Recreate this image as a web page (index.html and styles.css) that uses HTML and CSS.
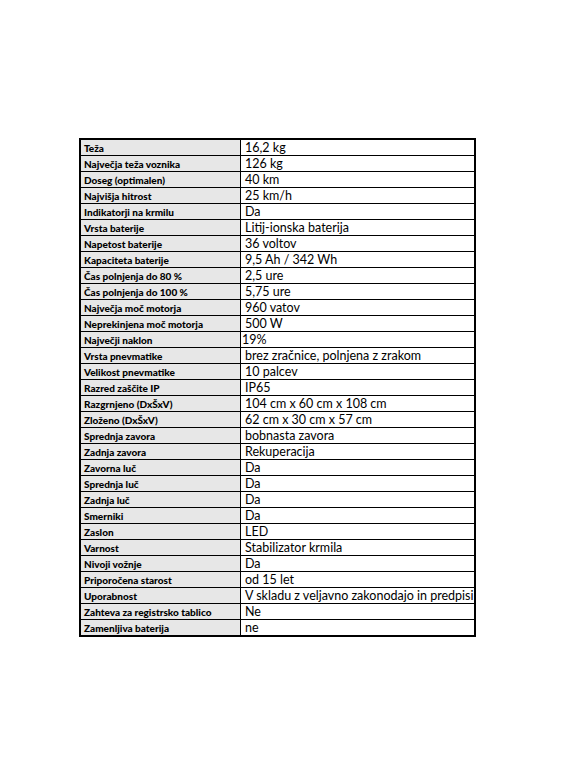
FILE: index.html
```html
<!DOCTYPE html>
<html lang="sl">
<head>
<meta charset="utf-8">
<title>Specifikacije</title>
<link rel="stylesheet" href="styles.css">
</head>
<body>
<main class="page">
<table class="specs">
<tbody>
<tr><th>Teža</th><td>16,2 kg</td></tr>
<tr><th>Največja teža voznika</th><td>126 kg</td></tr>
<tr><th>Doseg (optimalen)</th><td>40 km</td></tr>
<tr><th>Najvišja hitrost</th><td>25 km/h</td></tr>
<tr><th>Indikatorji na krmilu</th><td>Da</td></tr>
<tr><th>Vrsta baterije</th><td>Litij-ionska baterija</td></tr>
<tr><th>Napetost baterije</th><td>36 voltov</td></tr>
<tr><th>Kapaciteta baterije</th><td>9,5 Ah / 342 Wh</td></tr>
<tr><th>Čas polnjenja do 80 %</th><td>2,5 ure</td></tr>
<tr><th>Čas polnjenja do 100 %</th><td>5,75 ure</td></tr>
<tr><th>Največja moč motorja</th><td>960 vatov</td></tr>
<tr><th>Neprekinjena moč motorja</th><td>500 W</td></tr>
<tr><th>Največji naklon</th><td class="tight">19%</td></tr>
<tr><th>Vrsta pnevmatike</th><td>brez zračnice, polnjena z zrakom</td></tr>
<tr><th>Velikost pnevmatike</th><td>10 palcev</td></tr>
<tr><th>Razred zaščite IP</th><td>IP65</td></tr>
<tr><th>Razgrnjeno (DxŠxV)</th><td>104 cm x 60 cm x 108 cm</td></tr>
<tr><th>Zloženo (DxŠxV)</th><td>62 cm x 30 cm x 57 cm</td></tr>
<tr><th>Sprednja zavora</th><td>bobnasta zavora</td></tr>
<tr><th>Zadnja zavora</th><td>Rekuperacija</td></tr>
<tr><th>Zavorna luč</th><td>Da</td></tr>
<tr><th>Sprednja luč</th><td>Da</td></tr>
<tr><th>Zadnja luč</th><td>Da</td></tr>
<tr><th>Smerniki</th><td>Da</td></tr>
<tr><th>Zaslon</th><td>LED</td></tr>
<tr><th>Varnost</th><td>Stabilizator krmila</td></tr>
<tr><th>Nivoji vožnje</th><td>Da</td></tr>
<tr><th>Priporočena starost</th><td>od 15 let</td></tr>
<tr><th>Uporabnost</th><td>V skladu z veljavno zakonodajo in predpisi</td></tr>
<tr><th>Zahteva za registrsko tablico</th><td>Ne</td></tr>
<tr><th>Zamenljiva baterija</th><td>ne</td></tr>
</tbody>
</table>
</main>
</body>
</html>
```
FILE: styles.css
```css
html, body {
  margin: 0;
  padding: 0;
  background: #ffffff;
}

.page {
  padding: 138px 0 0 79px;
}

.specs {
  border-collapse: collapse;
  border: 2px solid #000;
  width: 397px;
  table-layout: fixed;
  font-family: Lato, "Liberation Sans", sans-serif;
  color: #000;
}

.specs tr {
  height: 16px;
}

.specs th,
.specs td {
  border: 1px solid #000;
  height: 15px;
  padding: 0;
  white-space: nowrap;
  overflow: hidden;
  vertical-align: bottom;
  line-height: 14px;
}

.specs th {
  width: 156px;
  background: #e7e7e7;
  text-align: left;
  font-weight: 900;
  font-size: 10px;
  padding-left: 3px;
}

.specs td {
  font-size: 12.5px;
  padding-left: 4px;
}

.specs td.tight {
  padding-left: 1px;
}
```
